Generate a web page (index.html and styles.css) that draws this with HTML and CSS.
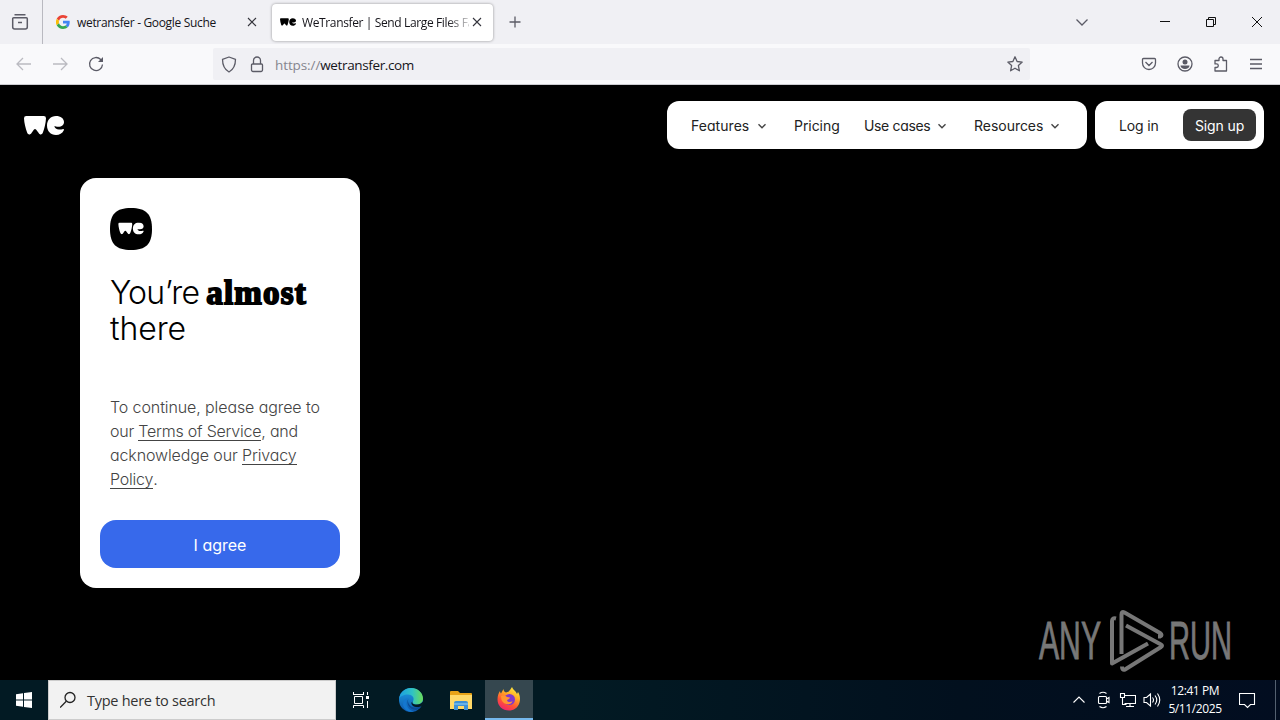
FILE: index.html
```html
<!DOCTYPE html>
<html lang="en">
<head>
<meta charset="utf-8">
<title>WeTransfer | Send Large Files Fast</title>
<link rel="stylesheet" href="styles.css">
</head>
<body>
<svg class="defs" width="0" height="0">
  <symbol id="we" viewBox="0 0 40 19">
    <path d="M0 2.2Q0 0 2.3 0H19.7Q22 0 22 2.2C21.8 7 20.4 12.5 18.8 16.8C18 19 15.7 19 14.7 17L12 13.6Q11 12.3 10 13.6L7.500 17C6.300 19 4 19 3.200 16.800C1.500 12 .2 7 0 2.200Z"/>
    <path d="M32 0C36.700 0 40 2.600 40 6C40 9 37.800 10.800 34.300 10.800C32.400 10.800 31.400 10.400 30.400 10.100C30.600 12.200 32.600 13.500 35 13.500C37 13.500 38 13.100 39.100 12.900C40 12.800 40.200 13.600 39.700 14.500C38.300 17.300 35.500 19 32 19C26.500 19 23 15 23 9.500C23 4 26.700 0 32 0Z"/>
  </symbol>
  <symbol id="chev" viewBox="0 0 8 6"><path d="M1 1l3 3 3-3" fill="none" stroke="#444" stroke-width="1.200"/></symbol>
  <symbol id="x" viewBox="0 0 10 10"><path d="M1 1l8 8M9 1l-8 8" fill="none" stroke="#35353d" stroke-width="1.100"/></symbol>
</svg>

<header class="tabs">
  <div class="view"><svg width="18" height="18" viewBox="0 0 18 18" class="line"><path stroke-width="1.500" d="M3.500 1.700h11M2.700 4.700h12.600a1 1 0 0 1 1 1v8.300a2 2 0 0 1-2 2H3.700a2 2 0 0 1-2-2V5.700a1 1 0 0 1 1-1zM7 9.500h4"/></svg></div>
  <div class="tab">
    <svg class="google" width="14" height="14" viewBox="0 0 48 48"><path fill="#ea4335" d="M24 9.500c3.500 0 6.700 1.200 9.200 3.600l6.900-6.900C35.900 2.400 30.500 0 24 0 14.600 0 6.500 5.400 2.600 13.200l8 6.200C12.400 13.700 17.700 9.500 24 9.500z"/><path fill="#4285f4" d="M47 24.500c0-1.600-.2-3.100-.4-4.500H24v9h13c-.6 3-2.300 5.500-4.800 7.200l7.700 6C44.400 38 47 31.800 47 24.500z"/><path fill="#fbbc05" d="M10.500 28.600a14 14 0 0 1 0-9.200l-8-6.200a24 24 0 0 0 0 21.600z"/><path fill="#34a853" d="M24 48c6.500 0 11.900-2.100 15.900-5.800l-7.700-6c-2.200 1.500-4.900 2.300-8.200 2.300-6.300 0-11.600-4.200-13.500-9.900l-8 6.200C6.500 42.600 14.600 48 24 48z"/></svg>
    <span class="tabname first">wetransfer - Google Suche</span>
    <svg width="10" height="10"><use href="#x"/></svg>
  </div>
  <div class="tab active">
    <svg class="fav" width="16" height="8"><use href="#we"/></svg>
    <span class="tabname second">WeTransfer | Send Large Files Fa</span>
    <svg width="10" height="10"><use href="#x"/></svg>
  </div>
  <svg class="plus line" width="12" height="12" viewBox="0 0 12 12"><path d="M6 .5v11M.5 6h11"/></svg>
  <div class="window">
    <svg class="line" width="14" height="8" viewBox="0 0 14 8"><path d="M1.500 1.500L7 7l5.500-5.500"/></svg>
    <svg class="win" width="10" height="10" viewBox="0 0 10 10"><path d="M0 4.500h10"/></svg>
    <svg class="win" width="10" height="10" viewBox="0 0 10 10"><path d="M2.500 2V.5h7v7H8M.5 2.500h7v7h-7z"/></svg>
    <svg class="win" width="10" height="10" viewBox="0 0 10 10"><path d="M0 0l10 10M10 0L0 10"/></svg>
  </div>
</header>

<nav class="bar">
  <div class="travel">
    <svg class="line dim" width="16" height="14" viewBox="0 0 16 14"><path d="M15 7H1M7 1L1 7l6 6"/></svg>
    <svg class="line dim" width="16" height="14" viewBox="0 0 16 14"><path d="M1 7h14M9 1l6 6-6 6"/></svg>
    <svg class="line" width="16" height="16" viewBox="0 0 16 16"><path d="M14.500 8.500A6.500 6.500 0 1 1 12.700 3.500L14.500 5.200"/><path d="M15 1v5h-5z" fill="#5b5b66" stroke="none"/></svg>
  </div>
  <div class="url">
    <svg class="line shield" width="16" height="17" viewBox="0 0 16 17"><path stroke-linejoin="round" d="M8 1l6.500 2.300C14.500 9 12.500 13.500 8 16 3.500 13.500 1.500 9 1.500 3.300z"/></svg>
    <svg class="line lock" width="14" height="17" viewBox="0 0 14 17"><path d="M3.500 8V4.500a3.500 3.500 0 0 1 7 0V8M2.500 8h9a1 1 0 0 1 1 1v5a1.500 1.500 0 0 1-1.500 1.500H3A1.500 1.500 0 0 1 1.500 14V9a1 1 0 0 1 1-1z"/></svg>
    <span class="address"><span class="scheme">https://</span>wetransfer.com</span>
    <svg class="line star" width="16" height="16" viewBox="0 0 16 16"><path stroke-linejoin="round" d="M8 .8l2.100 4.700 5.100.6-3.800 3.500 1 5.200L8 12.200l-4.400 2.600 1-5.200L.8 6.100l5.100-.6z"/></svg>
  </div>
  <div class="tools">
    <svg class="line" width="16" height="16" viewBox="0 0 16 16"><path d="M2.500 2.500h11a1 1 0 0 1 1 1V7a6.500 6.500 0 0 1-13 0V3.500a1 1 0 0 1 1-1zM4.500 6L8 9.500 11.500 6"/></svg>
    <svg class="line" width="16" height="16" viewBox="0 0 16 16"><circle cx="8" cy="8" r="7"/><circle cx="8" cy="6" r="2.500" fill="#5b5b66" stroke="none"/><path fill="#5b5b66" stroke="none" d="M3.500 9.500h9c0 2-2 3.500-4.500 3.500s-4.500-1.500-4.500-3.500z"/></svg>
    <svg class="line" width="16" height="16" viewBox="0 0 16 16"><path stroke-linejoin="round" d="M2 4.500h4V3a2 2 0 0 1 4 0v1.500h3.500V15H2v-3.500h1.500a1.800 1.800 0 0 0 0-3.600H2z"/></svg>
    <svg class="line" width="14" height="12" viewBox="0 0 14 12"><path d="M1 1.500h12M1 6h12M1 10.500h12"/></svg>
  </div>
</nav>

<main class="page">
  <div class="top">
    <svg class="brand" width="40" height="19"><use href="#we"/></svg>
    <div class="menu">
      <a class="features">Features</a><svg width="10" height="7"><use href="#chev"/></svg>
      <a class="pricing">Pricing</a>
      <a class="cases">Use cases</a><svg width="10" height="7"><use href="#chev"/></svg>
      <a class="resources">Resources</a><svg width="10" height="7"><use href="#chev"/></svg>
    </div>
    <div class="account"><a class="login">Log in</a><a class="signup">Sign up</a></div>
  </div>
  <section class="card">
    <svg class="badge" width="42" height="42" viewBox="0 0 42 42"><path d="M21 0C36 0 42 6 42 21S36 42 21 42 0 36 0 21 6 0 21 0Z"/><use href="#we" x="8" y="14.500" width="26" height="12" fill="#fff"/></svg>
    <h1><span class="youre">You’re</span> <b>almost</b><br><span class="there">there</span></h1>
    <p><span class="l1">To continue, please agree to</span><br><span class="l2">our <u>Terms of Service</u>, and</span><br><span class="l3">acknowledge our <u>Privacy</u></span><br><span class="l4"><u>Policy</u>.</span></p>
    <button><span>I agree</span></button>
  </section>
  <svg class="mark" width="200" height="64" viewBox="0 0 200 64">
    <text x="1" y="50" textLength="62" lengthAdjust="spacingAndGlyphs">ANY</text>
    <text x="131" y="50" textLength="63" lengthAdjust="spacingAndGlyphs">RUN</text>
    <g fill="none" stroke="#777" stroke-width="4" stroke-linejoin="round">
      <path d="M78 9.500q-4-1-4 2.500V54.500L110 34.500"/><path d="M83.500 45V5.500q0-3.500 3-2L122 24q3 2 0 3.500h-2"/><path d="M88 16.500l35 19q2 1 0 2.500L87 60.500q-3 1-3-3"/>
    </g>
  </svg>
</main>

<footer class="taskbar">
  <div class="start"><svg width="16" height="16" viewBox="0 0 16 16" fill="#fff"><path d="M0 2.300L7 1.200V7.500H0zM8 1.100L16 0v7.500H8zM0 8.500h7v6.300L0 13.800zM8 8.500h8V16l-8-1.100z"/></svg></div>
  <div class="search"><svg width="18" height="18" viewBox="0 0 18 18" fill="none" stroke="#222" stroke-width="1.300"><circle cx="10" cy="6.500" r="5"/><path d="M6.300 10.200L.1 16.500"/></svg><span>Type here to search</span></div>
  <div class="app view-app"><svg width="18" height="18" viewBox="0 0 18 18" fill="none" stroke="#fff"><path d="M1.500 1v3M11.500 1v3M1.500 3.500h10M2.500 5.500h8v7h-8zM1.500 17v-2.500h10V17M15.500 1v3M15.500 10v7"/><path d="M14 5h3v3h-3z" fill="#fff" stroke="none"/></svg></div>
  <div class="app edge"><svg width="24" height="24" viewBox="0 0 24 24">
    <defs><linearGradient id="eg" x1="0" x2="1"><stop stop-color="#1b9de2"/><stop offset=".55" stop-color="#2fc2c5"/><stop offset="1" stop-color="#6bdc58"/></linearGradient><linearGradient id="eb" y1="0" y2="1" x2="0"><stop stop-color="#1f9fe5"/><stop offset="1" stop-color="#0d56ab"/></linearGradient></defs>
    <circle cx="12" cy="12" r="12" fill="url(#eb)"/><path d="M0 11C1 4 6 0 12 0c7 0 12 5 12 10.500 0 3.500-2.500 6-6 6-3 0-5-1-4-3 2-4-1-7-5-7S1 8 0 11z" fill="url(#eg)"/><path d="M9 10c-4 4-1 12 6 13.500C9 25 4 21 4 16c0-3 2-5.500 5-6z" fill="#1477cf"/><path d="M9.500 10.500c-2 4 2 9.500 7 9 2.500 0 4-1 5.500-2 .5 1-2.500 4-5 4.500C10 21.500 6.500 15 9.500 10.500z" fill="#0c4b96"/><path d="M13.500 13.500c-1 2 1 3 4.500 3 2.500 0 4.500-1 6-3 .5 2-.5 4-1.500 4.500-2 1.500-7 1.500-9-.5-1.500-1.500-1.500-3 0-4z" fill="#041a23"/></svg></div>
  <div class="app"><svg width="22" height="19" viewBox="0 0 22 19"><path fill="#e8a317" d="M0 1q0-1 1-1h7l2 2h11q1 0 1 1v4H0z"/><path fill="#ffd968" d="M0 4h22v14H0z"/><path fill="#3d91d6" d="M4 19v-7q0-2 2-2h10q2 0 2 2v7h-4v-4H8v4z"/><path fill="#67b2e8" d="M4 12h14v2H4z"/></svg></div>
  <div class="app on"><svg width="24" height="24" viewBox="0 0 24 24">
    <defs><linearGradient id="ff" x1=".8" y1="0" x2=".3" y2="1"><stop stop-color="#fff044"/><stop offset=".35" stop-color="#ffae25"/><stop offset=".7" stop-color="#ff5135"/><stop offset="1" stop-color="#ef246f"/></linearGradient></defs>
    <path fill="url(#ff)" d="M3 4c0 1 .5 2 1 2.500L6.500 2c0 2 1 3 2.500 3.500 2-.5 3-1 4-2.500L15 0c1 3 4 4 5 7l1-2c2 3 2.500 7 1.500 10.500C21 21 16.500 23.500 12 23.500 5.500 23.500.5 19 .5 12.500.5 9 1.500 6 3 4z"/><circle cx="12.500" cy="12.500" r="5.500" fill="#8038cc"/><path d="M4 9c3-1 5 0 6 1l3 .5c0 1.500-3 2-3 3 1 2 4 2 5.500.5-1 5-9 4-11-1z" fill="#ff9631"/></svg></div>
  <div class="tray">
    <svg class="up" width="12" height="8" viewBox="0 0 12 8"><path d="M.5 6.500L6 1l5.500 5.500"/></svg>
    <svg class="meet" width="14" height="18" viewBox="0 0 14 18"><path d="M2.500 2.500Q6 0 9.500 2.500M2.500 15.500Q6 18 9.500 15.500M2.500 5.500h6q1 0 1 1v5q0 1-1 1h-6q-1 0-1-1v-5q0-1 1-1zM9.500 8l2.500-1.500v5L9.500 10"/></svg>
    <svg class="net" width="17" height="16" viewBox="0 0 17 16"><path d="M1.500 1.500h4v4h-4zM3.500 5.500v7h4M6 3.500h10.500v8H5.500M11 11.500v3M7 14.500h8"/></svg>
    <svg class="vol" width="18" height="16" viewBox="0 0 18 16"><path d="M1 5.500h2.500L7.500 2v12l-4-3.500H1zM9.500 5.500q2 2.500 0 5M12 3.500q3.500 4.500 0 9M14.500 1.500q4.500 6.500 0 13"/></svg>
    <div class="clock"><span class="time">12:41 PM</span><span class="date">5/11/2025</span></div>
    <svg class="note" width="17" height="17" viewBox="0 0 17 17"><path d="M.5 1.500h15v11h-4l-3 3-3-3h-5z"/></svg>
  </div>
</footer>
</body>
</html>
```
FILE: styles.css
```css
* { box-sizing: border-box; }
body { margin: 0; width: 1280px; height: 720px; overflow: hidden; display: flex; flex-direction: column; background: #000; font-family: "Open Sans", "Noto Sans", sans-serif; }
svg { display: block; flex: none; }
.defs { position: absolute; }
span, a { white-space: nowrap; }
.line { fill: none; stroke: #5b5b66; stroke-width: 1.3; }
.dim { stroke: #bbbbc1; }
.win { fill: none; stroke: #111; stroke-width: 1; }

.tabs { height: 44px; flex: none; display: flex; align-items: center; background: #f0f0f4; }
.view { width: 43px; height: 44px; padding-left: 11px; display: flex; align-items: center; border-right: 1px solid #b9b9c0; }
.tab { height: 38px; width: 224px; margin-left: 4px; padding-left: 9px; display: flex; align-items: center; font-size: 12px; color: #15141a; }
.active { width: 221px; height: 37px; margin-left: 1px; padding-left: 8px; background: #fff; border-radius: 4px; box-shadow: 0 0 3px rgba(0,0,0,.4); }
.google { margin-right: 7px; }
.first { width: 170px; letter-spacing: -.33px; }
.fav { margin-right: 6px; }
.second { width: 167px; margin-right: 3px; letter-spacing: -.37px; -webkit-mask-image: linear-gradient(90deg, #000 145px, transparent 172px); mask-image: linear-gradient(90deg, #000 145px, transparent 172px); }
.plus { margin-left: 16px; }
.window { margin-left: auto; padding-right: 18px; display: flex; align-items: center; gap: 36px; }
.window svg:first-child { margin-right: 35px; }

.bar { height: 41px; flex: none; display: flex; align-items: center; background: #f9f9fb; border-bottom: 1px solid #ccccd1; }
.travel { width: 213px; padding-left: 16px; display: flex; align-items: center; gap: 20px; }
.url { width: 817px; height: 32px; padding: 0 7px 0 8px; display: flex; align-items: center; background: #f0f0f4; border-radius: 2px; }
.lock { margin: 0 11px 0 13px; }
.address { padding-top: 2px; font-size: 13.5px; color: #15141a; letter-spacing: -.37px; }
.scheme { color: #85858e; letter-spacing: -.1px; }
.star { margin-left: auto; }
.tools { margin-left: auto; padding-right: 17px; display: flex; align-items: center; gap: 20px; }

.page { position: relative; height: 595px; flex: none; padding: 16px 16px 0 24px; font-family: Inter, "Liberation Sans", sans-serif; font-feature-settings: "cv11"; }
.top { height: 48px; display: flex; align-items: center; }
.brand { fill: #fff; }
.menu { width: 420px; height: 48px; margin-left: auto; padding-left: 24px; display: flex; align-items: center; background: #fff; border-radius: 12px; font-size: 14px; color: #222; }
.menu a { padding-top: 1px; }
.menu svg { margin-top: 3px; }
.features { width: 66px; letter-spacing: .05px; }
.pricing { width: 70px; margin-left: 27px; letter-spacing: -.05px; }
.cases { width: 73px; letter-spacing: -.35px; }
.resources { width: 76px; margin-left: 27px; letter-spacing: -.03px; }
.account { width: 169px; height: 48px; margin-left: 8px; padding: 0 8px 0 24px; display: flex; align-items: center; justify-content: space-between; background: #fff; border-radius: 12px; font-size: 14px; color: #222; letter-spacing: -.12px; }
.login { padding-top: 1px; }
.signup { width: 73px; height: 32px; padding-top: 1px; line-height: 32px; text-align: center; background: #343434; color: #fff; border-radius: 8px; }
.card { width: 280px; height: 410px; margin: 29px 0 0 56px; padding: 30px 20px 20px; display: flex; flex-direction: column; background: #fff; border-radius: 16px; }
.badge { margin-left: 10px; }
h1 { height: 72px; margin: 25px 0 0 10px; font-size: 32px; line-height: 36px; font-weight: 350; color: #000; white-space: nowrap; }
.youre { letter-spacing: -.75px; margin-right: -2px; }
.there { letter-spacing: -.1px; }
h1 b { font: 700 33px/30px "Liberation Serif", serif; letter-spacing: 1.2px; -webkit-text-stroke: 1.8px #000; }
p { height: 96px; margin: 48px 0 0 10px; font-size: 16px; line-height: 24px; font-weight: 350; color: #444; }
.l1 { letter-spacing: -.1px; }
.l2 { letter-spacing: -.22px; }
.l3 { letter-spacing: -.12px; }
.l4 { letter-spacing: -.2px; }
u { display: inline-block; height: 22px; text-decoration: none; border-bottom: 1px solid #444; }
button { width: 240px; height: 48px; margin-top: auto; border: 0; border-radius: 16px; background: #3769eb; color: #fff; font: 400 16px Inter, sans-serif; font-feature-settings: "cv11"; padding: 2px 0 0; }
.mark { position: absolute; left: 1038px; top: 524px; overflow: visible; }
.mark text { font: 53px "Liberation Sans", sans-serif; fill: #777; stroke: #777; stroke-width: .9px; }

.taskbar { height: 40px; flex: none; display: flex; align-items: stretch; background: linear-gradient(90deg, #021a23 0 45%, #02101e 75%, #020d20); color: #fff; }
.start { width: 48px; display: flex; align-items: center; justify-content: center; }
.search { width: 288px; padding-left: 11px; display: flex; align-items: center; gap: 9px; background: #f2f2f2; border: 1px solid #ccc; color: #333; font-size: 14.5px; letter-spacing: -.27px; }
.app { width: 50px; display: flex; align-items: center; justify-content: center; }
.view-app { width: 49px; }
.edge { width: 51px; }
.app + .on { margin-left: -1px; }
.on { width: 48px; background: #35474f; border-bottom: 2px solid #76b9ed; }
.tray { flex: 1; padding-right: 2px; display: flex; align-items: center; justify-content: flex-end; border-right: 1px solid #536070; margin-right: 4px; }
.tray svg { fill: none; stroke: #fff; stroke-width: 1.1; }
.meet { margin-left: 12px; }
.net { margin-left: 8px; }
.vol { margin-left: 7px; }
.clock { width: 54px; margin-left: 7px; display: flex; flex-direction: column; align-items: center; font-size: 12px; line-height: 18px; letter-spacing: -.4px; }
.note { margin: 0 17px; }
```
